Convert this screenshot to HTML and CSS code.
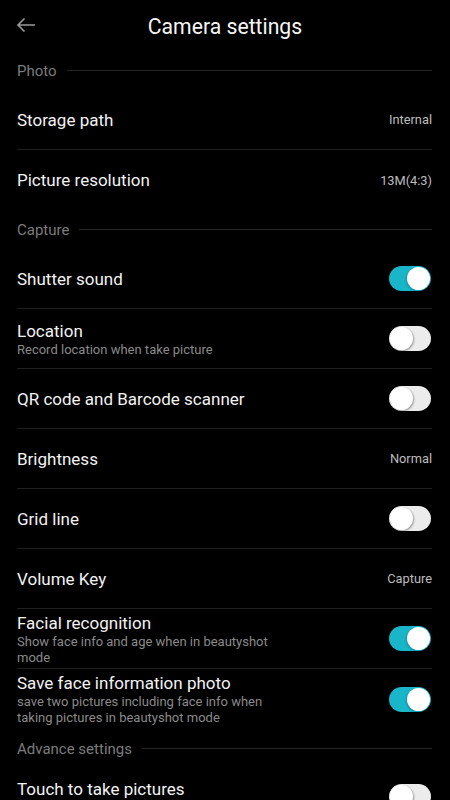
FILE: index.html
```html
<!DOCTYPE html>
<html>
<head>
<meta charset="utf-8">
<link rel="stylesheet" href="styles.css">
</head>
<body>
<div class="screen">
  <header class="topbar">
    <svg class="back" width="20" height="16" viewBox="0 0 20 16"><path d="M19 8H2M8.5 1.5L2 8l6.5 6.5" fill="none" stroke="#9a9a9a" stroke-width="1.6"/></svg>
    <div class="title">Camera settings</div>
  </header>

  <div class="section"><span>Photo</span><i></i></div>
  <div class="row div"><div class="txt"><div class="t">Storage path</div></div><div class="val">Internal</div></div>
  <div class="row"><div class="txt"><div class="t">Picture resolution</div></div><div class="val">13M(4:3)</div></div>

  <div class="section"><span>Capture</span><i></i></div>
  <div class="row div"><div class="txt"><div class="t">Shutter sound</div></div><div class="sw on"></div></div>
  <div class="row div"><div class="txt"><div class="t">Location</div><div class="d">Record location when take picture</div></div><div class="sw"></div></div>
  <div class="row div"><div class="txt"><div class="t">QR code and Barcode scanner</div></div><div class="sw"></div></div>
  <div class="row div"><div class="txt"><div class="t">Brightness</div></div><div class="val">Normal</div></div>
  <div class="row div"><div class="txt"><div class="t">Grid line</div></div><div class="sw"></div></div>
  <div class="row div"><div class="txt"><div class="t">Volume Key</div></div><div class="val">Capture</div></div>
  <div class="row div"><div class="txt"><div class="t">Facial recognition</div><div class="d">Show face info and age when in beautyshot mode</div></div><div class="sw on"></div></div>
  <div class="row"><div class="txt"><div class="t">Save face information photo</div><div class="d">save two pictures including face info when taking pictures in beautyshot mode</div></div><div class="sw on"></div></div>

  <div class="section"><span>Advance settings</span><i></i></div>
  <div class="row top"><div class="txt"><div class="t">Touch to take pictures</div></div><div class="sw"></div></div>
</div>
</body>
</html>
```

FILE: styles.css
```css
html, body {
  margin: 0;
  padding: 0;
  background: #000;
}
.screen {
  width: 450px;
  height: 800px;
  overflow: hidden;
  background: #000;
  font-family: Roboto, "Noto Sans", sans-serif;
  color: #f2f2f2;
}
.topbar {
  height: 51px;
  position: relative;
  display: flex;
  align-items: center;
  justify-content: center;
}
.back {
  position: absolute;
  left: 16px;
  top: 17px;
}
.title {
  font-size: 21.2px;
  color: #f5f5f5;
  margin-top: 2px;
}
.section {
  height: 39px;
  display: flex;
  align-items: center;
  padding: 0 18px 0 17px;
  gap: 10px;
}
.section span {
  font-size: 15px;
  color: #7c7c7c;
}
.section i {
  flex: 1;
  height: 1px;
  background: #262626;
  margin-top: -1px;
}
.row {
  height: 60px;
  box-sizing: border-box;
  margin: 0 18px 0 17px;
  display: flex;
  align-items: center;
  justify-content: space-between;
}
.row.div {
  border-bottom: 1px solid #1f1f1f;
}
.row.top {
  align-items: flex-start;
  padding-top: 10px;
}
.row.top .sw {
  margin-top: 6px;
}
.txt {
  display: flex;
  flex-direction: column;
  max-width: 270px;
}
.t {
  font-size: 17px;
  line-height: 22px;
  color: #f2f2f2;
}
.d {
  font-size: 13px;
  line-height: 16px;
  color: #8a8a8a;
}
.val {
  font-size: 12.8px;
  color: #bdbdbd;
}
.sw {
  width: 42px;
  height: 25px;
  border-radius: 13px;
  background: #ececec;
  position: relative;
  flex-shrink: 0;
  margin-right: 1px;
}
.sw::after {
  content: "";
  position: absolute;
  top: 1px;
  left: 1px;
  width: 23px;
  height: 23px;
  border-radius: 50%;
  background: #fff;
  box-shadow: 1px 1px 2px rgba(0,0,0,0.35);
}
.sw.on {
  background: #19b5c9;
}
.sw.on::after {
  left: 18px;
  box-shadow: -1px 1px 2px rgba(0,0,0,0.2);
}
```
